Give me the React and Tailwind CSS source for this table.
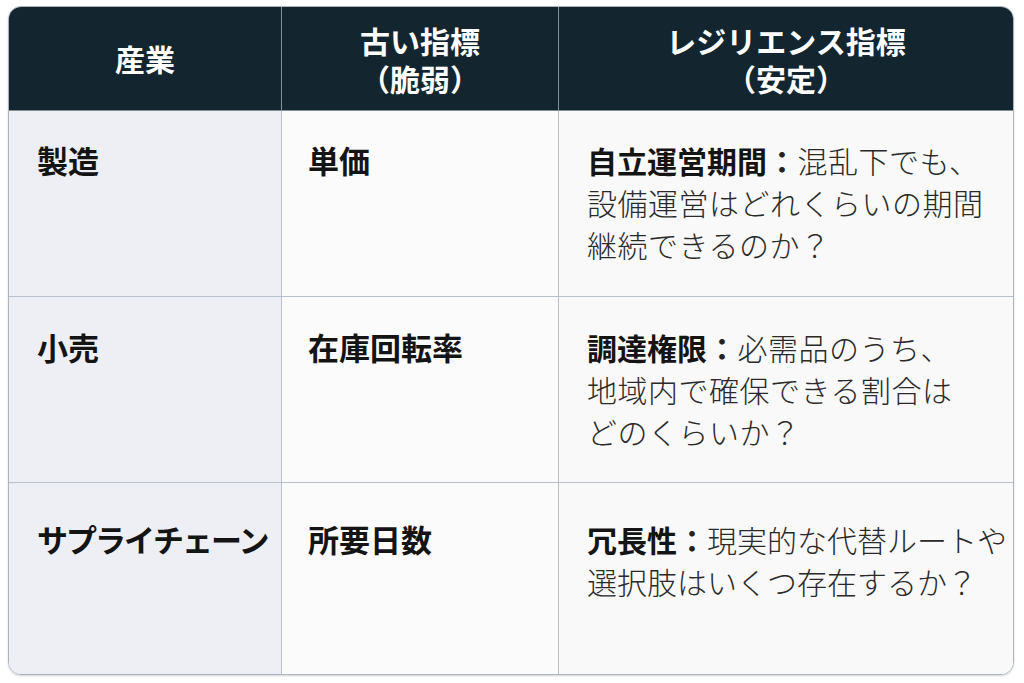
export default function App() {
  const font = { fontFamily: '"Noto Sans CJK JP", "Noto Sans", sans-serif' };
  const rows = [
    {
      pt: 'pt-[28px]',
      h: 'h-[186px]',
      a: '製造',
      b: '単価',
      head: '自立運営期間',
      lines: ['混乱下でも、', '設備運営はどれくらいの期間', '継続できるのか？'],
    },
    {
      pt: 'pt-[29px]',
      h: 'h-[186px]',
      a: '小売',
      b: '在庫回転率',
      head: '調達権限',
      lines: ['必需品のうち、', '地域内で確保できる割合は', 'どのくらいか？'],
    },
    {
      pt: 'pt-[35px]',
      h: 'flex-1',
      a: 'サプライチェーン',
      b: '所要日数',
      head: '冗長性',
      lines: ['現実的な代替ルートや', '選択肢はいくつ存在するか？'],
      last: true,
    },
  ];
  return (
    <div className="w-[1024px] h-[683px] bg-white pt-[6px] pl-[8px]" style={font}>
      <div className="w-[1006px] h-[669px] rounded-[13px] border border-[#aab3be] overflow-hidden flex flex-col shadow-[0_1px_2px_rgba(0,0,0,0.18)]">
        <div className="h-[104px] flex bg-[#13262f] text-white font-bold text-[30px] leading-[38px] border-b border-[#7f8d96]">
          <div className="w-[273px] flex items-center justify-center border-r border-[#8694a0]">
            <span className="pb-[2px]">産業</span>
          </div>
          <div className="w-[277px] flex items-center justify-center border-r border-[#8694a0] text-center">
            <p>
              古い指標
              <br />
              （脆弱）
            </p>
          </div>
          <div className="flex-1 flex items-center justify-center text-center">
            <p>
              レジリエンス指標
              <br />
              （安定）
            </p>
          </div>
        </div>
        {rows.map((r, i) => (
          <div key={i} className={`${r.h} flex ${r.last ? '' : 'border-b border-[#b8c0cb]'}`}>
            <div className={`w-[273px] bg-[#edeff4] border-r border-[#b8c0cb] pl-[28px] ${r.pt} text-[31px] leading-[42px] font-bold text-[#141414] whitespace-nowrap ${r.last ? 'tracking-[-2px]' : ''}`}>
              {r.a}
            </div>
            <div className={`w-[277px] bg-[#fbfbfc] border-r border-[#b8c0cb] pl-[26px] ${r.pt} text-[31px] leading-[42px] font-bold text-[#141414] whitespace-nowrap`}>
              {r.b}
            </div>
            <div className={`flex-1 bg-[#f9f9fa] pl-[28px] ${r.pt} text-[30px] leading-[42px] font-light text-[#2a2a2a] whitespace-nowrap ${r.last ? 'tracking-normal' : 'tracking-[0.5px]'}`}>
              <div>
                <span className="font-bold text-[#141414] tracking-normal">{r.head}</span>
                <span className="font-bold text-[#222]">：</span>
                <span>{r.lines[0]}</span>
              </div>
              {r.lines.slice(1).map((l, j) => (
                <div key={j}>{l}</div>
              ))}
            </div>
          </div>
        ))}
      </div>
    </div>
  );
}
